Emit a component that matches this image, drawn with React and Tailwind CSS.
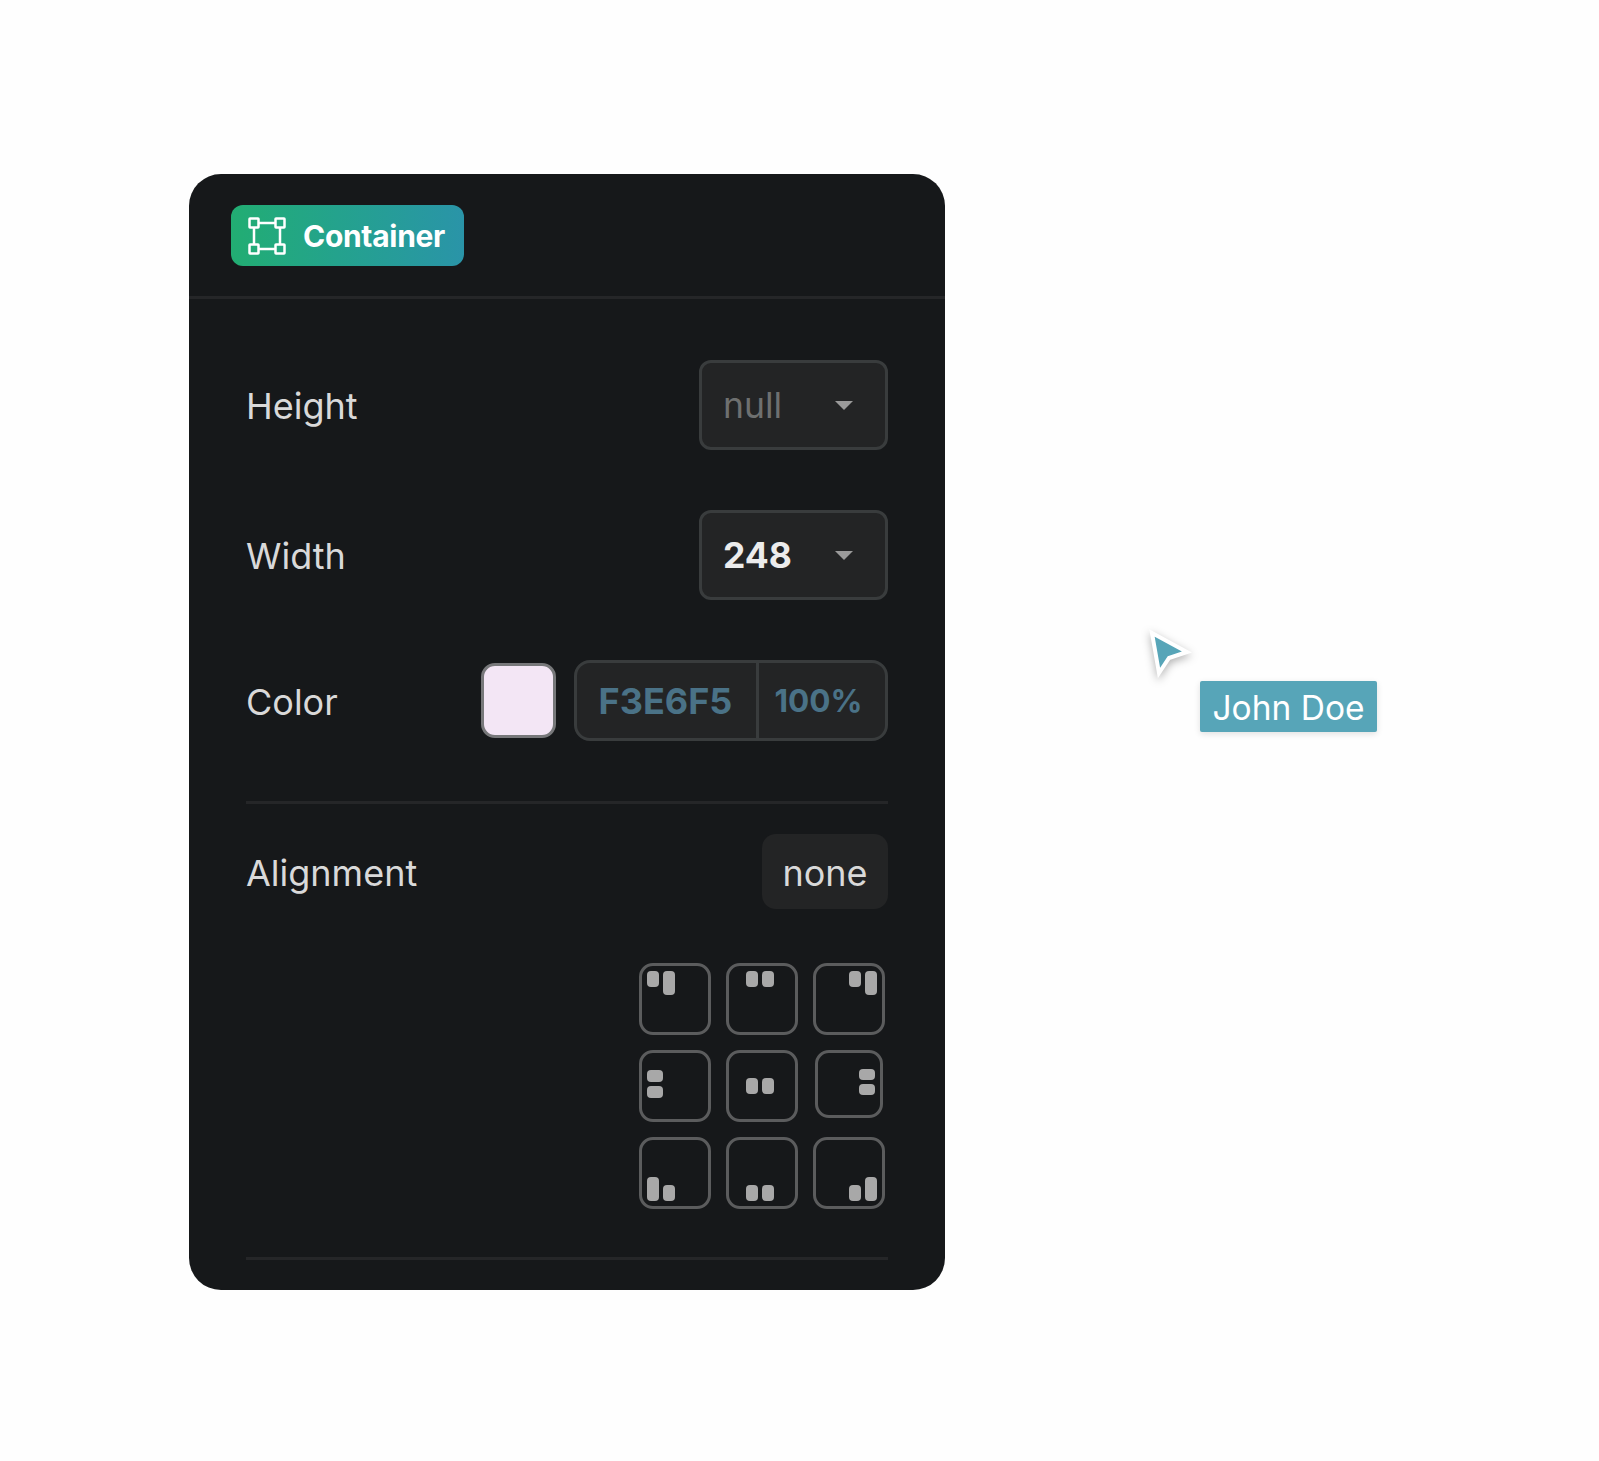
const tiles = [
  { box: 'items-start justify-start', bars: ['w-[12px] h-[16px]', 'w-[12px] h-[24px]'] },
  { box: 'items-start justify-center pr-[9px]', bars: ['w-[12px] h-[16px]', 'w-[12px] h-[16px]'] },
  { box: 'items-start justify-end', bars: ['w-[12px] h-[16px]', 'w-[12px] h-[24px]'] },
  { box: 'flex-col justify-center items-start pb-[9px]', bars: ['w-[16px] h-[12px]', 'w-[16px] h-[12px]'] },
  { box: 'items-center justify-center pr-[9px]', bars: ['w-[12px] h-[16px]', 'w-[12px] h-[16px]'] },
  { box: 'flex-col justify-center items-end pb-[9px]', bars: ['w-[16px] h-[11px]', 'w-[16px] h-[11px]'], small: true },
  { box: 'items-end justify-start', bars: ['w-[12px] h-[24px]', 'w-[12px] h-[16px]'] },
  { box: 'items-end justify-center pr-[9px]', bars: ['w-[12px] h-[16px]', 'w-[12px] h-[16px]'] },
  { box: 'items-end justify-end', bars: ['w-[12px] h-[16px]', 'w-[12px] h-[24px]'] },
]

function ContainerIcon() {
  return (
    <svg width="38" height="38" viewBox="0 0 38 38" fill="none" stroke="#fff" strokeWidth="2.5">
      <rect x="1.5" y="1.5" width="9" height="9" rx="0.5" />
      <rect x="27.5" y="1.5" width="9" height="9" rx="0.5" />
      <rect x="1.5" y="27.5" width="9" height="9" rx="0.5" />
      <rect x="27.5" y="27.5" width="9" height="9" rx="0.5" />
      <path d="M10.5 6H27.5M10.5 32H27.5M6 10.5V27.5M32 10.5V27.5" />
    </svg>
  )
}

function Select({ children, muted }) {
  return (
    <div className="flex h-[90px] w-[189px] items-center justify-between rounded-[12px] border-[3px] border-[#393c3d] bg-[#232425] pl-[21px] pr-[32px]">
      <span className={muted ? 'pt-[2px] text-[35.5px] text-[#6e7070]' : 'pt-[2px] text-[35.5px] font-bold text-[#ececec]'}>{children}</span>
      <span className="h-0 w-0 border-x-[9px] border-t-[9px] border-x-transparent border-t-[#9a9a9a]" />
    </div>
  )
}

function Tile({ box, bars, small }) {
  return (
    <div className={`flex gap-[4px] border-[3px] border-[#5b5c5d] p-[5px] ${small ? 'ml-[2px] h-[68px] w-[68px] rounded-[14px]' : 'h-[72px] w-[72px] rounded-[14px]'} ${box}`}>
      {bars.map((b, i) => (
        <span key={i} className={`rounded-[4px] bg-[#a8a8a8] ${b}`} />
      ))}
    </div>
  )
}

export default function App() {
  return (
    <div className="relative min-h-[1461px] bg-[#fefefe] pl-[189px] pt-[174px] font-['Inter',sans-serif]">
      <div className="w-[756px] rounded-[32px] bg-[#16181a] pt-[31px] pb-[30px]">
        <div className="border-b-[3px] border-[#252628] pb-[30px] pl-[42px]">
          <div className="flex h-[61px] w-[233px] items-center gap-[17px] rounded-[12px] bg-gradient-to-r from-[#22ad72] to-[#2a94a8] pl-[17px]">
            <ContainerIcon />
            <span className="pt-[2px] text-[30px] font-bold tracking-[-0.3px] text-white">Container</span>
          </div>
        </div>

        <div className="px-[57px] pt-[61px]">
          <div className="flex items-center justify-between">
            <span className="pt-[2px] text-[36px] text-[#d9d9d9]">Height</span>
            <Select muted>null</Select>
          </div>
          <div className="mt-[60px] flex items-center justify-between">
            <span className="pt-[2px] text-[36px] text-[#d9d9d9]">Width</span>
            <Select>248</Select>
          </div>
          <div className="mt-[60px] flex items-center">
            <span className="flex-1 pt-[2px] text-[36px] text-[#d9d9d9]">Color</span>
            <div className="h-[75px] w-[75px] rounded-[14px] border-[3px] border-[#77787a] bg-[#f3e6f5]" />
            <div className="ml-[18px] flex h-[81px] w-[314px] items-center rounded-[16px] border-[3px] border-[#393c3d] bg-[#232425] text-[#4a7287]">
              <span className="flex h-full w-[182px] items-center justify-center border-r-[3px] border-[#393c3d] pr-[2px] text-[36px] font-bold">F3E6F5</span>
              <span className="flex-1 pr-[7px] text-center text-[31.5px] font-bold">100%</span>
            </div>
          </div>

          <div className="mt-[60px] h-[3px] bg-[#252628]" />

          <div className="mt-[30px] flex items-center justify-between">
            <span className="pt-[2px] text-[36px] text-[#d9d9d9]">Alignment</span>
            <div className="flex h-[75px] w-[126px] items-center justify-center rounded-[14px] bg-[#232425] pt-[2px] text-[36px] text-[#d9d9d9]">none</div>
          </div>

          <div className="mt-[54px] flex justify-end pr-[3px]">
            <div className="grid grid-cols-[72px_72px_72px] gap-[15px]">
              {tiles.map((t, i) => (
                <Tile key={i} {...t} />
              ))}
            </div>
          </div>

          <div className="mt-[48px] h-[3px] bg-[#252628]" />
        </div>
      </div>

      <svg className="absolute left-[1140px] top-[622px] drop-shadow-[0_3px_4px_rgba(0,0,0,0.3)]" width="60" height="60" viewBox="0 0 60 60">
        <path d="M12 11 L47 30 L29 36 L19 51 Z" fill="#57a5b8" stroke="#fff" strokeWidth="4" strokeLinejoin="miter" />
      </svg>
      <div className="absolute left-[1200px] top-[681px] flex h-[51px] w-[177px] items-center justify-center rounded-[2px] bg-[#57a5b8] pt-[3px] text-[33.5px] text-white shadow-[0_2px_6px_rgba(0,0,0,0.12)]">
        John Doe
      </div>
    </div>
  )
}
